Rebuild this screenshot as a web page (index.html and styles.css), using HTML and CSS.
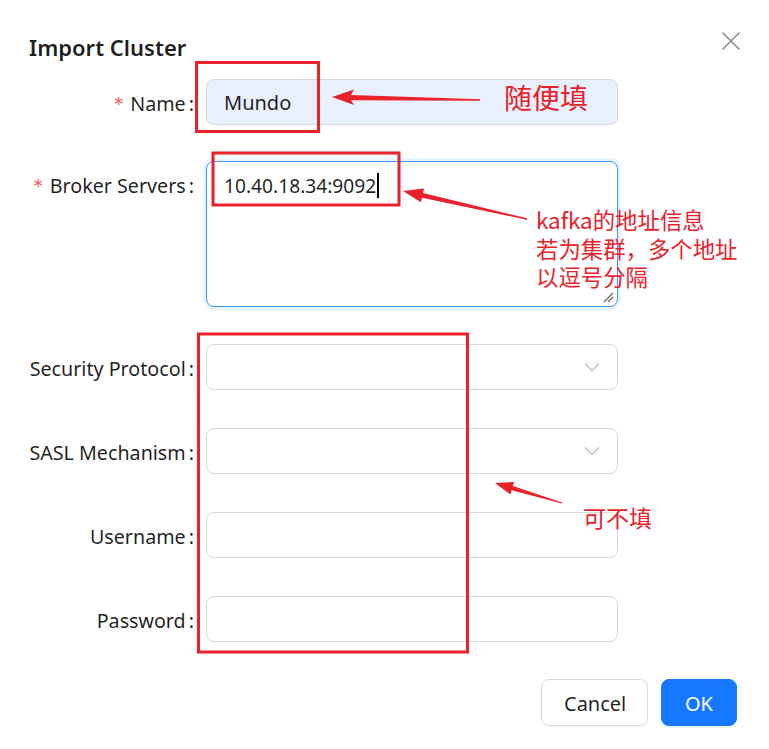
FILE: index.html
```html
<!DOCTYPE html>
<html lang="en">
<head>
<meta charset="utf-8">
<title>Import Cluster</title>
<link rel="stylesheet" href="styles.css">
</head>
<body>
<div class="modal">
  <div class="header">
    <div class="title">Import Cluster</div>
    <button class="close" type="button" aria-label="Close">
      <svg width="20" height="20" viewBox="0 0 20 20"><path d="M1.5 1.5 L18.5 18.5 M18.5 1.5 L1.5 18.5" stroke="#8c8c8c" stroke-width="1.6" fill="none"/></svg>
    </button>
  </div>

  <div class="form">
    <div class="row row-name">
      <div class="label"><span class="req">*</span>Name<span class="colon">:</span></div>
      <div class="field autofill">Mundo</div>
    </div>
    <div class="row row-area">
      <div class="label"><span class="req">*</span>Broker Servers<span class="colon">:</span></div>
      <div class="field area focused">10.40.18.34:9092<span class="caret"></span>
        <svg class="grip" width="12" height="12" viewBox="0 0 12 12"><path d="M2 11 L11 2 M6 11 L11 6" stroke="#666" stroke-width="1.3" fill="none"/></svg>
      </div>
    </div>
    <div class="row">
      <div class="label">Security Protocol<span class="colon">:</span></div>
      <div class="field select">
        <svg class="chev" width="16" height="10" viewBox="0 0 16 10"><path d="M1 1.5 L8 8.5 L15 1.5" stroke="#bfbfbf" stroke-width="1.4" fill="none"/></svg>
      </div>
    </div>
    <div class="row">
      <div class="label">SASL Mechanism<span class="colon">:</span></div>
      <div class="field select">
        <svg class="chev" width="16" height="10" viewBox="0 0 16 10"><path d="M1 1.5 L8 8.5 L15 1.5" stroke="#bfbfbf" stroke-width="1.4" fill="none"/></svg>
      </div>
    </div>
    <div class="row">
      <div class="label">Username<span class="colon">:</span></div>
      <div class="field"></div>
    </div>
    <div class="row row-last">
      <div class="label">Password<span class="colon">:</span></div>
      <div class="field"></div>
    </div>
  </div>

  <div class="footer">
    <button class="btn" type="button">Cancel</button>
    <button class="btn primary" type="button">OK</button>
  </div>

  <svg class="marks" width="769" height="749" viewBox="0 0 769 749">
    <g fill="none" stroke="#e8212a" stroke-width="3">
      <rect x="196.5" y="62.5" width="122" height="69"/>
      <rect x="213" y="153" width="186" height="52"/>
      <rect x="198.5" y="334" width="269" height="318"/>
    </g>
    <g fill="#e8212a">
      <polygon points="332,97 354,89.5 351,95 480,99.3 480,100.7 351,100.3 354,105"/>
      <polygon points="403,191 424,188.6 423,193 527.1,218.3 526.9,219.7 422,197.8 421,202.2"/>
      <polygon points="495,483 514.1,482 512.8,486.1 562.1,502.4 561.9,503.6 511.6,490.3 510.3,494.4"/>
    </g>
  </svg>
  <div class="note note-1">随便填</div>
  <div class="note note-2">kafka的地址信息<br>若为集群，多个地址<br>以逗号分隔</div>
  <div class="note note-3">可不填</div>
</div>
</body>
</html>
```

FILE: styles.css
```css
* { box-sizing: border-box; }
html, body { margin: 0; padding: 0; background: #fff; }
body {
  font-family: "Noto Sans", "Open Sans", "Noto Sans CJK SC", sans-serif;
  color: rgba(0,0,0,0.88);
  width: 769px;
  height: 749px;
  overflow: hidden;
}
.modal {
  position: relative;
  width: 769px;
  height: 749px;
}
.header {
  display: flex;
  justify-content: space-between;
  align-items: flex-start;
  padding: 30px 28px 0 29px;
  height: 79px;
}
.title {
  font-size: 22px;
  font-weight: 600;
  line-height: 35px;
  color: rgba(0,0,0,0.88);
}
.close {
  border: 0;
  background: transparent;
  padding: 0;
  margin-top: 1px;
  width: 20px;
  height: 20px;
  cursor: pointer;
}
.close svg { display: block; }

.form { display: flex; flex-direction: column; }
.row {
  display: grid;
  grid-template-columns: 206px 412px;
  margin-bottom: 38px;
}
.row-name { margin-bottom: 36px; }
.row-area { margin-bottom: 37px; }
.row-last { margin-bottom: 37px; }
.label {
  display: flex;
  justify-content: flex-end;
  align-items: center;
  height: 46px;
  padding: 3px 12px 0 0;
  font-size: 19.7px;
  color: rgba(0,0,0,0.88);
  white-space: nowrap;
}
.req {
  color: #ff4d4f;
  font-family: "DejaVu Sans", sans-serif;
  font-size: 18px;
  margin-right: 7px;
}
.colon { margin-left: 3px; }
.field {
  position: relative;
  height: 46px;
  border: 1px solid #d9d9d9;
  border-radius: 8px;
  background: #fff;
  font-size: 20px;
  line-height: 46px;
  padding: 0 17px;
  color: rgba(0,0,0,0.88);
}
.autofill { background: #e8f0fe; }
.area {
  height: 146px;
  line-height: 48px;
  font-size: 19.2px;
}
.focused {
  border-color: #4096ff;
  box-shadow: 0 0 0 3px rgba(5,145,255,0.1);
}
.caret {
  display: inline-block;
  width: 2px;
  height: 25px;
  background: #000;
  vertical-align: -5px;
  margin-left: 1px;
}
.grip { position: absolute; right: 3px; bottom: 3px; }
.chev { position: absolute; right: 17px; top: 17px; }

.footer {
  display: flex;
  justify-content: flex-end;
  gap: 13px;
  padding-right: 32px;
}
.btn {
  height: 47px;
  border-radius: 8px;
  border: 1px solid #d9d9d9;
  background: #fff;
  font-family: "Noto Sans", "Open Sans", sans-serif;
  font-size: 20px;
  color: rgba(0,0,0,0.88);
  padding: 2px 22px 0;
  min-width: 76px;
  width: 107px;
  box-shadow: 0 2px 0 rgba(0,0,0,0.02);
}
.primary {
  width: 76px;
  background: #1677ff;
  border-color: #1677ff;
  color: #fff;
  box-shadow: 0 2px 0 rgba(5,145,255,0.1);
}

.marks { position: absolute; left: 0; top: 0; pointer-events: none; }
.note {
  position: absolute;
  color: #e8212a;
  font-family: "Noto Sans CJK SC", sans-serif;
  white-space: nowrap;
}
.note-1 { left: 504px; top: 81px; font-size: 28px; line-height: 32px; }
.note-2 { left: 536px; top: 205px; font-size: 22.4px; line-height: 28.5px; }
.note-3 { left: 583px; top: 503px; font-size: 23px; line-height: 29px; }
```
